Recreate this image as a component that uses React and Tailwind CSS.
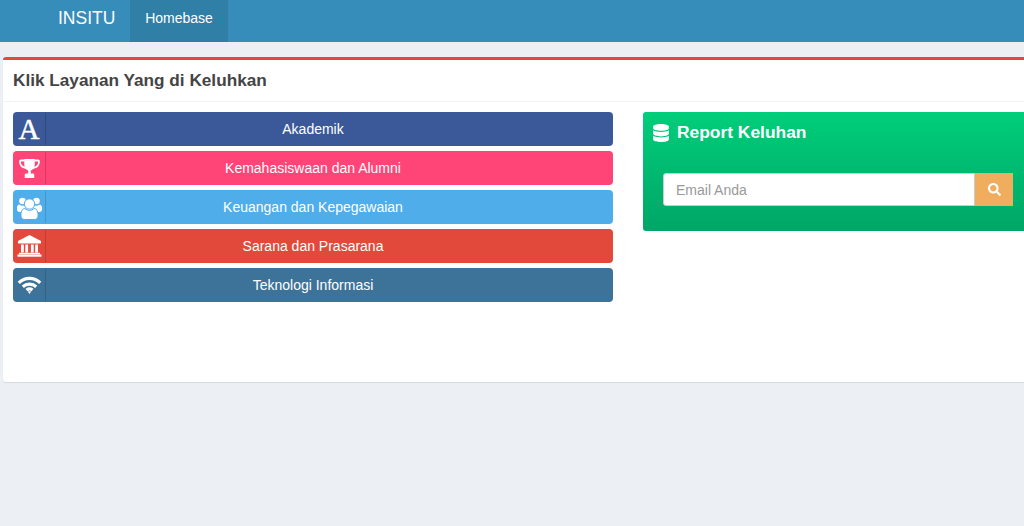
import React from "react";
import { FaDatabase, FaSearch } from "react-icons/fa";

const TrophyIcon = () => (
    <svg width="21" height="19" viewBox="0 0 22 19" preserveAspectRatio="none" fill="currentColor">
        <path d="M6 1.500H2c-.6 0-1 .4-1 1 0 3.500 2.500 6 6.500 6.500M16 1.500h4c.6 0 1 .4 1 1 0 3.500-2.500 6-6.500 6.500" fill="none" stroke="currentColor" strokeWidth="1.800" />
        <path d="M5.500 0h11v5.500c0 3-2 5.500-4.200 6.200V14.500h2.200c.8 0 1.500.7 1.500 1.500v3h-10v-3c0-.8.7-1.500 1.500-1.500h2.200v-2.800C7.500 11 5.500 8.500 5.500 5.500z" />
    </svg>
);

const UsersIcon = () => (
    <svg width="25" height="23" viewBox="0 0 25 23" className="mt-[2px]" fill="currentColor">
        <circle cx="5.500" cy="4" r="3.300" />
        <circle cx="19.500" cy="4" r="3.300" />
        <path d="M0 11c0-2 1-3.500 2.500-3.500 1 .8 2 1.200 3 1.200s2-.4 3-1.200h8c1 .8 2 1.200 3 1.200s2-.4 3-1.200c1.500 0 2.500 1.500 2.500 3.500v1.500c0 1.500-1 2.500-2.500 2.500h-20c-1.500 0-2.500-1-2.500-2.500z" />
        <path
            d="M4 17.500c0-3.500 1.500-6 4-6 1.200 1.200 2.800 1.800 4.500 1.800s3.300-.6 4.500-1.800c2.500 0 4 2.500 4 6v1.500c0 2.200-1.500 3.500-3.500 3.500h-10c-2 0-3.500-1.300-3.500-3.500z"
            stroke="#4fadea"
            strokeWidth="1"
        />
        <circle cx="12.500" cy="7" r="5.200" stroke="#4fadea" strokeWidth="1" />
    </svg>
);

const BankIcon = () => (
    <svg width="25" height="22" viewBox="0 0 25 22" fill="currentColor">
        <path d="M12.500 0L24 6V8.500H1V6z" />
        <rect x="4" y="9.500" width="2.800" height="8" />
        <rect x="8.300" y="9.500" width="2.800" height="8" />
        <rect x="13.900" y="9.500" width="2.800" height="8" />
        <rect x="18.200" y="9.500" width="2.800" height="8" />
        <rect x="2" y="17.800" width="21" height="1.500" />
        <rect x="0.500" y="19.500" width="24" height="2.200" />
    </svg>
);

const WifiIcon = () => (
    <svg width="25" height="18" viewBox="0 0 25 18" fill="none" stroke="currentColor" strokeWidth="3.200">
        <path d="M1.800 6.800C7.800 1 17.200 1 23.200 6.800" />
        <path d="M5.800 10.800c3.800-3.500 9.600-3.500 13.400 0" />
        <path d="M9.500 14c1.800-1.300 4.200-1.300 6 0" />
        <path d="M10.800 15.500L12.500 18L14.200 15.500C13.200 15 11.800 15 10.800 15.500z" fill="currentColor" stroke="none" />
    </svg>
);

const layanan = [
    { label: "Akademik", bg: "bg-[#3b5998]", line: "border-[#2f4a80]", icon: <span className="font-['Liberation_Serif',serif] text-[29px] leading-none [-webkit-text-stroke:0.5px_white]">A</span> },
    { label: "Kemahasiswaan dan Alumni", bg: "bg-[#ff4477]", line: "border-[#d93a65]", icon: <TrophyIcon /> },
    { label: "Keuangan dan Kepegawaian", bg: "bg-[#4fadea]", line: "border-[#4494c8]", icon: <UsersIcon /> },
    { label: "Sarana dan Prasarana", bg: "bg-[#e3493b]", line: "border-[#c23e32]", icon: <BankIcon /> },
    { label: "Teknologi Informasi", bg: "bg-[#3d7399]", line: "border-[#346282]", icon: <WifiIcon /> },
];

const App = () => {
    return (
        <div className="h-[526px] w-[1024px] overflow-hidden bg-[#ecf0f5] font-['Liberation_Sans',sans-serif]">
            {/* navbar */}
            <nav className="flex h-[42px] bg-[#368db9] text-white">
                <div className="flex w-[130px] items-center pb-[6px] pl-[58px] text-[17.500px]">INSITU</div>
                <div className="flex w-[98px] items-center justify-center bg-[#2f7fa6] pb-[6px] text-sm">Homebase</div>
            </nav>

            {/* card */}
            <div className="ml-[3px] mt-[15px] h-[325px] w-[1040px] rounded-[3px] border-t-[3px] border-[#e3493b] bg-white shadow-[0_1px_1px_rgba(0,0,0,0.1)]">
                <div className="flex h-[42px] items-center border-b border-[#f2f2f2] pl-[10px]">
                    <h3 className="text-[17.200px] font-bold text-[#444444]">Klik Layanan Yang di Keluhkan</h3>
                </div>
                <div className="flex pl-[10px] pt-[10px]">
                    <div className="flex w-[600px] flex-col gap-[5px]">
                        {layanan.map((item) => (
                            <a key={item.label} className={`flex h-[34px] items-center rounded text-white ${item.bg}`}>
                                <span className={`flex h-[32px] w-[33px] shrink-0 items-center justify-center border-r ${item.line}`}>
                                    {item.icon}
                                </span>
                                <span className="flex-1 pr-[33px] text-center text-sm">{item.label}</span>
                            </a>
                        ))}
                    </div>
                    <div className="ml-[30px] h-[119px] w-[400px] rounded-[3px] bg-gradient-to-b from-[#00ce7a] to-[#00a667] text-white">
                        <div className="flex h-[40px] items-center pl-[9px] pt-[1px] text-[17.400px] font-bold">
                            <FaDatabase size={18} className="mr-[7px]" />
                            Report Keluhan
                        </div>
                        <div className="ml-[20px] mt-[21px] flex h-[33px] w-[350px]">
                            <input
                                type="text"
                                placeholder="Email Anda"
                                className="h-full w-[312px] rounded-l-[3px] border border-[#cccccc] bg-white px-3 text-sm text-[#555555] placeholder:text-[#999999]"
                            />
                            <button className="flex h-full w-[38px] items-center justify-center bg-[#f0ad5e] text-white">
                                <FaSearch size={13} />
                            </button>
                        </div>
                    </div>
                </div>
            </div>
        </div>
    );
};

export default App;
